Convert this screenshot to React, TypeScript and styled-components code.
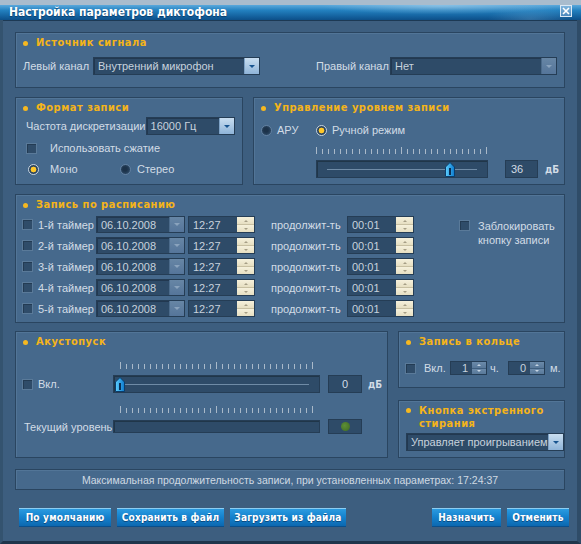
import styled, { createGlobalStyle } from "styled-components";

const GlobalStyle = createGlobalStyle`
  * { box-sizing: border-box; }
  html, body { margin: 0; padding: 0; background: #3d5e7f; }
  body { font-family: "Liberation Sans", Arial, sans-serif; }
`;

const Window = styled.div`
  width: 581px;
  height: 544px;
  display: flex;
  flex-direction: column;
  background: #3d5e7f;
  overflow: hidden;
`;

const TitleBar = styled.header`
  flex: 0 0 20px;
  border-top: 5px solid #a9bccd;
  background:
    radial-gradient(ellipse 170px 12px at 440px 1px, rgba(255, 255, 255, 0.3), transparent 70%),
    radial-gradient(ellipse 60px 20px at 530px 14px, rgba(190, 230, 255, 0.18), transparent 70%),
    linear-gradient(#5aa9dc, #2381c0 35%, #14629f 75%, #0d4f88);
  display: flex;
  align-items: flex-start;
  justify-content: space-between;
  padding: 0 9px 0 9px;
  box-shadow: 0 1px 0 #1d3954;
`;

const TitleText = styled.h1`
  margin: 0;
  font: bold 12px/15px "DejaVu Sans Condensed", "DejaVu Sans", Verdana, sans-serif;
  font-stretch: condensed;
  color: #ffffff;
  text-shadow: 0 1px 1px #0a3a66;
`;

const CloseButton = styled.span`
  width: 12px;
  height: 12px;
  border: 1px solid #dbe9f5;
  background: linear-gradient(#7fb4dc, #4b88bd);
  display: flex;
  align-items: center;
  justify-content: center;
`;

const Body = styled.main`
  flex: 1;
  display: flex;
  flex-direction: column;
  padding: 12px 12px 0 12px;
  border-left: 3px solid #34536f;
  border-right: 4px solid #2f4c68;
  border-bottom: 3px solid #1f354b;
`;

const Row = styled.div<{ $gap?: number; $mt?: number }>`
  display: flex;
  gap: ${(p) => p.$gap ?? 10}px;
  margin-top: ${(p) => p.$mt ?? 0}px;
`;

const Column = styled.div<{ $w: number; $rows: string; $gap: number }>`
  flex: 0 0 ${(p) => p.$w}px;
  min-width: 0;
  display: grid;
  grid-template-rows: ${(p) => p.$rows};
  row-gap: ${(p) => p.$gap}px;
`;

const Panel = styled.section<{ $h: number; $w?: number }>`
  flex: ${(p) => (p.$w ? `0 0 ${p.$w}px` : "1 1 auto")};
  min-width: 0;
  height: ${(p) => p.$h}px;
  background: #46698c;
  border: 1px solid #2a4560;
  box-shadow: inset 1px 1px 0 #527597;
  padding: 3px 7px 0 7px;
  display: flex;
  flex-direction: column;
`;

const PanelTitle = styled.h2`
  margin: 0;
  display: flex;
  align-items: flex-start;
  gap: 8px;
  font: bold 11px/14px "DejaVu Sans Condensed", "DejaVu Sans", Verdana, sans-serif;
  font-stretch: condensed;
  letter-spacing: 0.5px;
  color: #f4b41a;
  &::before {
    content: "";
    flex: 0 0 5px;
    height: 5px;
    margin-top: 5px;
    border-radius: 50%;
    background: #f6b820;
  }
`;

const WrapTitle = styled(PanelTitle)`
  line-height: 13px;
  &::before {
    margin-top: 4px;
  }
`;

const Line = styled.div<{ $mt?: number; $ml?: number; $h?: number }>`
  display: flex;
  align-items: center;
  margin-top: ${(p) => p.$mt ?? 0}px;
  margin-left: ${(p) => p.$ml ?? 0}px;
  height: ${(p) => p.$h ?? 18}px;
`;

const Label = styled.span<{ $w?: number; $ml?: number }>`
  font-size: 11px;
  color: #d2dce6;
  white-space: nowrap;
  ${(p) => (p.$w ? `flex: 0 0 ${p.$w}px;` : "")}
  margin-left: ${(p) => p.$ml ?? 0}px;
`;

const Spacer = styled.span`
  flex: 1;
`;

const SelectBox = styled.div<{ $w: number; $h?: number }>`
  flex: 0 0 ${(p) => p.$w}px;
  height: ${(p) => p.$h ?? 18}px;
  display: flex;
  background: #2e4b68;
  border: 1px solid #253d55;
  box-shadow: inset 1px 1px 0 #223850;
`;

const FieldText = styled.span<{ $right?: boolean }>`
  flex: 1;
  overflow: hidden;
  white-space: nowrap;
  padding: 0 ${(p) => (p.$right ? 4 : 0)}px 0 ${(p) => (p.$right ? 0 : 4)}px;
  font-size: 11px;
  color: #c7d2dd;
  display: flex;
  align-items: center;
  justify-content: ${(p) => (p.$right ? "flex-end" : "flex-start")};
`;

const SelectArrow = styled.span<{ $disabled?: boolean }>`
  flex: 0 0 15px;
  display: flex;
  align-items: center;
  justify-content: center;
  background: ${(p) =>
    p.$disabled
      ? "linear-gradient(#6786a5, #55759a)"
      : "linear-gradient(#c9def0, #8fb4d8)"};
  border-left: 1px solid ${(p) => (p.$disabled ? "#4b6a8a" : "#7ea2c6")};
  &::after {
    content: "";
    border-left: 3px solid transparent;
    border-right: 3px solid transparent;
    border-top: 3px solid ${(p) => (p.$disabled ? "#8aa3bd" : "#17548f")};
  }
`;

const Select = ({
  w,
  value,
  disabled,
  h,
}: {
  w: number;
  value: string;
  disabled?: boolean;
  h?: number;
}) => (
  <SelectBox $w={w} $h={h}>
    <FieldText>{value}</FieldText>
    <SelectArrow $disabled={disabled} />
  </SelectBox>
);

const Box = styled.span<{ $ml?: number }>`
  flex: 0 0 11px;
  width: 11px;
  height: 11px;
  margin-left: ${(p) => p.$ml ?? 0}px;
  background: #2f4c69;
  border: 1px solid #5a7a99;
  box-shadow: inset 1px 1px 0 #233b53;
`;

const Radio = styled.span<{ $on?: boolean; $ml?: number }>`
  flex: 0 0 11px;
  width: 11px;
  height: 11px;
  margin-left: ${(p) => p.$ml ?? 0}px;
  border-radius: 50%;
  border: 1px solid ${(p) => (p.$on ? "#c7d3df" : "#6280a0")};
  background: ${(p) =>
    p.$on
      ? "radial-gradient(circle, #ffc82a 0 2.6px, #2a445e 3.2px)"
      : "radial-gradient(circle at 45% 45%, #1c3249 0 2px, #2b4763 5px)"};
`;

const Option = styled.span<{ $w?: number; $gap: number }>`
  display: flex;
  align-items: center;
  gap: ${(p) => p.$gap}px;
  ${(p) => (p.$w ? `flex: 0 0 ${p.$w}px;` : "")}
`;

const Track = styled.div<{ $w: number; $h?: number }>`
  position: relative;
  flex: 0 0 ${(p) => p.$w}px;
  height: ${(p) => p.$h ?? 18}px;
  background: #2e4b68;
  border: 1px solid #253d55;
  box-shadow: inset 1px 1px 0 #203649;
`;

const Groove = styled.span`
  position: absolute;
  left: 10px;
  right: 10px;
  top: 50%;
  height: 1px;
  background: #6f8ba6;
`;

const ThumbWrap = styled.span<{ $x: number }>`
  position: absolute;
  top: 1px;
  left: ${(p) => p.$x}px;
  width: 10px;
  height: 15px;
`;

const Thumb = ({ x }: { x: number }) => (
  <ThumbWrap $x={x}>
    <svg width="10" height="15" viewBox="0 0 10 15">
      <defs>
        <linearGradient id="tg" x1="0" y1="0" x2="1" y2="0">
          <stop offset="0" stopColor="#5fd0ff" />
          <stop offset="1" stopColor="#0a78cc" />
        </linearGradient>
      </defs>
      <path d="M0.5 5 L5 0.5 L9.5 5 L9.5 14.5 L0.5 14.5 Z" fill="url(#tg)" stroke="#0b3d6b" />
      <rect x="4" y="6" width="2" height="7" fill="#0a2f55" />
    </svg>
  </ThumbWrap>
);

const ValueBox = styled.span<{ $w: number; $h?: number; $ml?: number }>`
  flex: 0 0 ${(p) => p.$w}px;
  height: ${(p) => p.$h ?? 18}px;
  margin-left: ${(p) => p.$ml ?? 0}px;
  display: flex;
  align-items: center;
  justify-content: center;
  background: #2e4b68;
  border: 1px solid #253d55;
  font-size: 11px;
  color: #d2dce6;
`;

const ValueText = styled.span<{ $align: "left" | "center" }>`
  width: 100%;
  padding: 0 5px;
  text-align: ${(p) => p.$align};
`;

const Unit = styled.span<{ $ml: number }>`
  margin-left: ${(p) => p.$ml}px;
  font: bold 10px "DejaVu Sans Condensed", "DejaVu Sans", Verdana, sans-serif;
  color: #d2dce6;
`;

const TickHolder = styled.div<{ $ml: number; $mt: number }>`
  margin-left: ${(p) => p.$ml}px;
  margin-top: ${(p) => p.$mt}px;
  height: 7px;
  display: flex;
`;

const Ticks = ({ w, ml, mt }: { w: number; ml: number; mt: number }) => {
  const count = Math.floor(w / 6);
  const step = (w - 1) / count;
  const mid = Math.round(count / 2);
  return (
    <TickHolder $ml={ml} $mt={mt}>
      <svg width={w} height="7">
        {Array.from({ length: count + 1 }, (_, i) => {
          const tall = i === 0 || i === count || i === mid;
          return (
            <rect
              key={i}
              x={Math.round(i * step)}
              y={tall ? 0 : 2}
              width="1"
              height={tall ? 7 : 5}
              fill="#a9b9c9"
            />
          );
        })}
      </svg>
    </TickHolder>
  );
};

const TimeField = styled.span<{ $w: number; $ml?: number; $h?: number }>`
  flex: 0 0 ${(p) => p.$w}px;
  height: ${(p) => p.$h ?? 17}px;
  margin-left: ${(p) => p.$ml ?? 0}px;
  display: flex;
  background: #2e4b68;
  border: 1px solid #253d55;
`;

const SpinStack = styled.span<{ $w: number; $blue?: boolean }>`
  flex: 0 0 ${(p) => p.$w}px;
  display: flex;
  flex-direction: column;
  gap: 1px;
  background: ${(p) => (p.$blue ? "#3f5f7f" : "#c8c0a2")};
`;

const SpinHalf = styled.span<{ $down?: boolean; $blue?: boolean }>`
  flex: 1;
  display: flex;
  align-items: center;
  justify-content: center;
  background: ${(p) =>
    p.$blue ? "linear-gradient(#6b8aa9, #587899)" : "linear-gradient(#f6f1dc, #e6dfc2)"};
  &::after {
    content: "";
    border-left: 2px solid transparent;
    border-right: 2px solid transparent;
    ${(p) => (p.$down ? "border-top" : "border-bottom")}: 2px solid
      ${(p) => (p.$blue ? "#c5d4e2" : "#a59e86")};
  }
`;

const Spinner = ({ w, blue }: { w: number; blue?: boolean }) => (
  <SpinStack $w={w} $blue={blue}>
    <SpinHalf $blue={blue} />
    <SpinHalf $down $blue={blue} />
  </SpinStack>
);

const TimerList = styled.div`
  display: flex;
  flex-direction: column;
  gap: 4px;
  margin-top: 4px;
`;

const TimerRow = styled.div`
  display: flex;
  align-items: center;
  height: 17px;
`;

const ScheduleBody = styled.div`
  display: flex;
  align-items: flex-start;
`;

const LockBox = styled.div`
  display: flex;
  align-items: flex-start;
  gap: 8px;
  margin: 7px 0 0 45px;
  ${Box} {
    margin-top: 1px;
  }
`;

const LockText = styled.span`
  font-size: 11px;
  line-height: 14px;
  color: #d2dce6;
`;

const LevelDot = styled.span`
  width: 9px;
  height: 9px;
  border-radius: 50%;
  background: radial-gradient(circle at 40% 40%, #5d8f36, #3f6a22);
`;

const StatusBar = styled.div`
  margin-top: 11px;
  height: 21px;
  background: #46698c;
  border: 1px solid #2a4560;
  box-shadow: inset 1px 1px 0 #527597;
  display: flex;
  align-items: center;
  justify-content: center;
  font-size: 10.5px;
  color: #cfd9e3;
`;

const ButtonBar = styled.div`
  margin-top: 18px;
  display: flex;
  gap: 6px;
  padding-left: 4px;
  margin-right: -4px;
`;

const Button = styled.button<{ $w: number; $push?: boolean }>`
  flex: 0 0 ${(p) => p.$w}px;
  height: 19px;
  padding: 0;
  ${(p) => (p.$push ? "margin-left: auto;" : "")}
  border: none;
  border-top: 1px solid #8ccdf2;
  border-bottom: 1px solid #0a4f8c;
  background: linear-gradient(#2b9be0, #1583cf 45%, #0c68b0);
  color: #ffffff;
  font: bold 10px "DejaVu Sans Condensed", "DejaVu Sans", Verdana, sans-serif;
  font-stretch: condensed;
  letter-spacing: 0.2px;
  text-shadow: 0 1px 0 #0a4a80;
`;

const timers = ["1-й таймер", "2-й таймер", "3-й таймер", "4-й таймер", "5-й таймер"];

export default function App() {
  return (
    <Window>
      <GlobalStyle />
      <TitleBar>
        <TitleText>Настройка параметров диктофона</TitleText>
        <CloseButton>
          <svg width="8" height="8" viewBox="0 0 8 8">
            <path d="M1 1 L7 7 M7 1 L1 7" stroke="#ffffff" strokeWidth="1.6" />
          </svg>
        </CloseButton>
      </TitleBar>
      <Body>
        <Row>
          <Panel $h={56}>
            <PanelTitle>Источник сигнала</PanelTitle>
            <Line $mt={7}>
              <Label $w={70}>Левый канал</Label>
              <Select w={167} value="Внутренний микрофон" />
              <Spacer />
              <Label $w={74}>Правый канал</Label>
              <Select w={167} value="Нет" disabled />
            </Line>
          </Panel>
        </Row>

        <Row $mt={9}>
          <Panel $h={88} $w={228}>
            <PanelTitle>Формат записи</PanelTitle>
            <Line $mt={2}>
              <Label $w={118} $ml={3}>
                Частота дискретизации
              </Label>
              <Select w={89} value="16000 Гц" />
            </Line>
            <Line $mt={7} $h={12}>
              <Box $ml={3} />
              <Label $ml={13}>Использовать сжатие</Label>
            </Line>
            <Line $mt={9} $h={12}>
              <Option $w={97} $gap={11}>
                <Radio $on $ml={5} />
                <Label>Моно</Label>
              </Option>
              <Option $gap={6}>
                <Radio />
                <Label>Стерео</Label>
              </Option>
            </Line>
          </Panel>
          <Panel $h={88}>
            <PanelTitle>Управление уровнем записи</PanelTitle>
            <Line $mt={9} $h={12}>
              <Option $w={55} $gap={5}>
                <Radio />
                <Label>АРУ</Label>
              </Option>
              <Option $gap={5}>
                <Radio $on />
                <Label>Ручной режим</Label>
              </Option>
            </Line>
            <Ticks w={171} ml={55} mt={11} />
            <Line $mt={6} $ml={55}>
              <Track $w={172}>
                <Groove />
                <Thumb x={128} />
              </Track>
              <ValueBox $w={33} $ml={17}>
                <ValueText $align="left">36</ValueText>
              </ValueBox>
              <Unit $ml={7}>дБ</Unit>
            </Line>
          </Panel>
        </Row>

        <Row $mt={9}>
          <Panel $h={129}>
            <PanelTitle>Запись по расписанию</PanelTitle>
            <ScheduleBody>
              <TimerList>
                {timers.map((t) => (
                  <TimerRow key={t}>
                    <Box $ml={-1} />
                    <Label $w={58} $ml={5}>
                      {t}
                    </Label>
                    <Select w={89} h={17} value="06.10.2008" disabled />
                    <TimeField $w={67} $ml={3}>
                      <FieldText>12:27</FieldText>
                      <Spinner w={17} />
                    </TimeField>
                    <Label $w={76} $ml={16}>
                      продолжит-ть
                    </Label>
                    <TimeField $w={67}>
                      <FieldText>00:01</FieldText>
                      <Spinner w={17} />
                    </TimeField>
                  </TimerRow>
                ))}
              </TimerList>
              <LockBox>
                <Box />
                <LockText>
                  Заблокировать
                  <br />
                  кнопку записи
                </LockText>
              </LockBox>
            </ScheduleBody>
          </Panel>
        </Row>

        <Row $mt={8}>
          <Panel $h={127} $w={373}>
            <PanelTitle>Акустопуск</PanelTitle>
            <Ticks w={193} ml={97} mt={13} />
            <Line $mt={6}>
              <Box $ml={-1} />
              <Label $w={75} $ml={5}>
                Вкл.
              </Label>
              <Track $w={207}>
                <Groove />
                <Thumb x={1} />
              </Track>
              <ValueBox $w={34} $ml={8}>
                <ValueText $align="center">0</ValueText>
              </ValueBox>
              <Unit $ml={6}>дБ</Unit>
            </Line>
            <Ticks w={193} ml={97} mt={13} />
            <Line $mt={6} $h={15}>
              <Label $w={89} $ml={1}>
                Текущий уровень
              </Label>
              <Track $w={207} $h={13} />
              <ValueBox $w={34} $h={15} $ml={8}>
                <LevelDot />
              </ValueBox>
            </Line>
          </Panel>
          <Column $w={167} $rows="57px 58px" $gap={12}>
            <Panel $h={57}>
              <PanelTitle>Запись в кольце</PanelTitle>
              <Line $mt={12} $h={14}>
                <Box $ml={-1} />
                <Label $w={26} $ml={8}>
                  Вкл.
                </Label>
                <TimeField $w={37} $h={14}>
                  <FieldText $right>1</FieldText>
                  <Spinner w={14} blue />
                </TimeField>
                <Label $w={18} $ml={3}>
                  ч.
                </Label>
                <TimeField $w={37} $h={14}>
                  <FieldText $right>0</FieldText>
                  <Spinner w={14} blue />
                </TimeField>
                <Label $ml={5}>м.</Label>
              </Line>
            </Panel>
            <Panel $h={58}>
              <WrapTitle>Кнопка экстренного стирания</WrapTitle>
              <Line $mt={3}>
                <Select w={151} value="Управляет проигрыванием" />
              </Line>
            </Panel>
          </Column>
        </Row>

        <StatusBar>
          Максимальная продолжительность записи, при установленных параметрах: 17:24:37
        </StatusBar>

        <ButtonBar>
          <Button $w={92}>По умолчанию</Button>
          <Button $w={107}>Сохранить в файл</Button>
          <Button $w={116}>Загрузить из файла</Button>
          <Button $w={69} $push>
            Назначить
          </Button>
          <Button $w={62}>Отменить</Button>
        </ButtonBar>
      </Body>
    </Window>
  );
}
